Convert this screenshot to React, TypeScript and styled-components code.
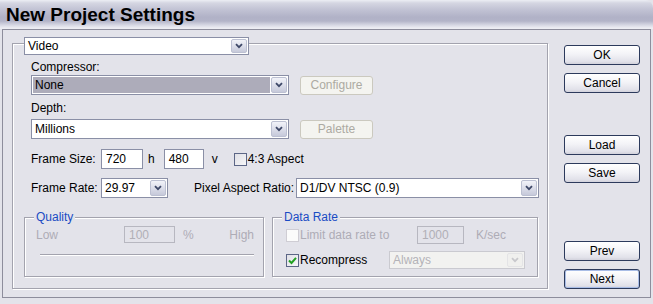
import React from "react";
import styled, { createGlobalStyle } from "styled-components";

const GlobalStyle = createGlobalStyle`
  html, body {
    margin: 0;
    padding: 0;
    background: #e3e3ea;
  }
  body {
    font-family: "Liberation Sans", Arial, sans-serif;
    font-size: 12px;
    color: #000;
  }
  * {
    box-sizing: border-box;
  }
`;

const Dialog = styled.div`
  width: 653px;
  height: 304px;
  display: flex;
  flex-direction: column;
  background: #e3e3ea;
  overflow: hidden;
`;

const TitleBar = styled.div`
  height: 29px;
  flex: none;
  display: flex;
  align-items: center;
  padding-left: 6px;
  border-top-right-radius: 8px;
  background: linear-gradient(
    to bottom,
    #eceef4 0px,
    #d5d6e2 3px,
    #c3c4d5 9px,
    #b1b2c7 17px,
    #b3b4c8 21px,
    #d6d7e3 25px,
    #ededf3 28px
  );
  font-size: 19px;
  font-weight: bold;
  color: #000;
`;

const Body = styled.div`
  height: 269px;
  margin: 0 2px;
  border: 1px solid #8d8d9c;
  display: flex;
  padding: 0 10px 0 9px;
`;

const MainGroup = styled.div`
  width: 536px;
  height: 246px;
  margin-top: 13px;
  border: 1px solid #a3a3ae;
  box-shadow: inset 1px 1px 0 #fff, 1px 1px 0 #fff;
  padding: 0 9px 0 11px;
  display: flex;
  flex-direction: column;
`;

const Upper = styled.div`
  padding-left: 7px;
  display: flex;
  flex-direction: column;
`;

const Caption = styled.div<{ $top: number }>`
  height: 14px;
  line-height: 14px;
  margin-top: ${(p) => p.$top}px;
`;

const Row = styled.div<{ $top: number; $h: number }>`
  display: flex;
  align-items: center;
  height: ${(p) => p.$h}px;
  margin-top: ${(p) => p.$top}px;
`;

const Label = styled.span<{ $w: number; $muted?: boolean }>`
  width: ${(p) => p.$w}px;
  flex: none;
  white-space: nowrap;
  color: ${(p) => (p.$muted ? "#aeacb6" : "#000")};
`;

const Unit = styled.span<{ $l: number; $r?: number; $muted?: boolean; $push?: boolean }>`
  margin: 0 ${(p) => p.$r ?? 0}px 0 ${(p) => (p.$push ? "auto" : `${p.$l}px`)};
  white-space: nowrap;
  color: ${(p) => (p.$muted ? "#aeacb6" : "#000")};
`;

const SelectShell = styled.div<{ $w: number; $h: number; $disabled?: boolean }>`
  width: ${(p) => p.$w}px;
  height: ${(p) => p.$h}px;
  flex: none;
  border: 1px solid ${(p) => (p.$disabled ? "#cacad0" : "#8a8fa6")};
  background: ${(p) => (p.$disabled ? "#f2f2f0" : "#fff")};
  display: flex;
  align-items: stretch;
`;

const SelectValue = styled.span<{ $hl?: boolean; $disabled?: boolean }>`
  flex: 1;
  display: flex;
  align-items: center;
  padding-left: 2px;
  margin: 1px 0 1px 1px;
  background: ${(p) => (p.$hl ? "#adacba" : "transparent")};
  color: ${(p) => (p.$disabled ? "#b4b3b8" : "#000")};
  white-space: nowrap;
  overflow: hidden;
`;

const ArrowButton = styled.span<{ $disabled?: boolean }>`
  width: 16px;
  flex: none;
  margin: 1px;
  display: flex;
  align-items: center;
  justify-content: center;
  border: 1px solid ${(p) => (p.$disabled ? "#e4e4e6" : "#bcc0d2")};
  border-radius: 2px;
  background: ${(p) =>
    p.$disabled
      ? "#f0f0ee"
      : "linear-gradient(to bottom, #f2f3f9 0%, #dcdeea 50%, #c6c9da 100%)"};
`;

const Legend = styled.div`
  margin: -7px 0 0 0;
  align-self: flex-start;
`;

const GhostButton = styled.div<{ $left: number }>`
  width: 73px;
  height: 19px;
  margin-left: ${(p) => p.$left}px;
  border: 1px solid #cbc9bf;
  border-radius: 3px;
  background: #f4f4f0;
  color: #acaaa2;
  display: flex;
  align-items: center;
  justify-content: center;
`;

const TextField = styled.div<{ $w: number; $h: number; $disabled?: boolean }>`
  width: ${(p) => p.$w}px;
  height: ${(p) => p.$h}px;
  flex: none;
  border: 1px solid ${(p) => (p.$disabled ? "#b7b7c0" : "#8a8fa6")};
  background: ${(p) => (p.$disabled ? "transparent" : "#fff")};
  color: ${(p) => (p.$disabled ? "#b0afb6" : "#000")};
  padding-left: 4px;
  display: flex;
  align-items: center;
`;

const Box = styled.span<{ $disabled?: boolean }>`
  width: 13px;
  height: 13px;
  flex: none;
  border: 1px solid ${(p) => (p.$disabled ? "#cfcdd4" : "#5c6686")};
  background: ${(p) =>
    p.$disabled ? "#fbfbfb" : "linear-gradient(135deg, #e0e0e6 0%, #f6f6f8 100%)"};
  display: flex;
  align-items: center;
  justify-content: center;
`;

const CheckRow = styled.span<{ $w: number; $muted?: boolean; $indent?: number }>`
  width: ${(p) => p.$w}px;
  flex: none;
  margin-left: ${(p) => p.$indent ?? 0}px;
  display: flex;
  align-items: center;
  gap: 1px;
  white-space: nowrap;
  color: ${(p) => (p.$muted ? "#aeacb6" : "#000")};
`;

const SubGroups = styled.div`
  display: flex;
  gap: 8px;
  margin-top: 19px;
`;

const SubGroup = styled.div<{ $w: number; $padR: number }>`
  width: ${(p) => p.$w}px;
  height: 60px;
  border: 1px solid #a3a3ae;
  box-shadow: inset 1px 1px 0 #fff, 1px 1px 0 #fff;
  padding: 0 ${(p) => p.$padR}px 0 11px;
  display: flex;
  flex-direction: column;
`;

const GroupTitle = styled.span`
  align-self: flex-start;
  margin: -8px 0 0 -2px;
  padding: 0 2px;
  height: 14px;
  line-height: 14px;
  background: #e3e3ea;
  color: #1a4bc4;
`;

const Groove = styled.div`
  margin: 11px 0 0 4px;
  border-top: 1px solid #a3a3ae;
  border-bottom: 1px solid #fff;
`;

const Side = styled.div`
  margin-left: 16px;
  padding-top: 15px;
  display: flex;
  flex-direction: column;
`;

const ButtonGroup = styled.div<{ $top: number }>`
  display: flex;
  flex-direction: column;
  gap: 8px;
  margin-top: ${(p) => p.$top}px;
`;

const PushButton = styled.div<{ $default?: boolean }>`
  width: 76px;
  height: 20px;
  border: 1px solid #2c3a5c;
  border-radius: 3px;
  background: linear-gradient(to bottom, #ffffff 0%, #f3f3f7 45%, #e2e2ea 85%, #d2d2dc 100%);
  box-shadow: ${(p) => (p.$default ? "inset 0 0 0 1px #a9bde6" : "none")};
  display: flex;
  align-items: center;
  justify-content: center;
  color: #000;
`;

const Chevron = ({ muted }: { muted?: boolean }) => (
  <svg width="8" height="6" viewBox="0 0 8 6">
    <path
      d="M1 1.2 L4 4.2 L7 1.2"
      fill="none"
      stroke={muted ? "#c8c8cc" : "#3e4868"}
      strokeWidth="1.8"
    />
  </svg>
);

const Tick = () => (
  <svg width="9" height="9" viewBox="0 0 9 9">
    <path d="M1 4.5 L3.5 7 L8 1.8" fill="none" stroke="#21a121" strokeWidth="2" />
  </svg>
);

type SelectProps = {
  w: number;
  h: number;
  value: string;
  hl?: boolean;
  disabled?: boolean;
};

const Select = ({ w, h, value, hl, disabled }: SelectProps) => (
  <SelectShell $w={w} $h={h} $disabled={disabled}>
    <SelectValue $hl={hl} $disabled={disabled}>
      {value}
    </SelectValue>
    <ArrowButton $disabled={disabled}>
      <Chevron muted={disabled} />
    </ArrowButton>
  </SelectShell>
);

const App: React.FC = () => {
  return (
    <>
      <GlobalStyle />
      <Dialog>
        <TitleBar>New Project Settings</TitleBar>
        <Body>
          <MainGroup>
            <Legend>
              <Select w={225} h={18} value="Video" />
            </Legend>
            <Upper>
              <Caption $top={5}>Compressor:</Caption>
              <Row $top={1} $h={20}>
                <Select w={258} h={20} value="None" hl />
                <GhostButton $left={11}>Configure</GhostButton>
              </Row>
              <Caption $top={6}>Depth:</Caption>
              <Row $top={4} $h={20}>
                <Select w={258} h={20} value="Millions" />
                <GhostButton $left={11}>Palette</GhostButton>
              </Row>
              <Row $top={10} $h={20}>
                <Label $w={70}>Frame Size:</Label>
                <TextField $w={42} $h={20}>720</TextField>
                <Unit $l={5} $r={9}>h</Unit>
                <TextField $w={40} $h={20}>480</TextField>
                <Unit $l={8} $r={16}>v</Unit>
                <CheckRow $w={80}>
                  <Box />
                  4:3 Aspect
                </CheckRow>
              </Row>
              <Row $top={9} $h={20}>
                <Label $w={70}>Frame Rate:</Label>
                <Select w={67} h={20} value="29.97" />
                <Unit $l={26} $r={2}>Pixel Aspect Ratio:</Unit>
                <Select w={243} h={20} value="D1/DV NTSC (0.9)" />
              </Row>
            </Upper>
            <SubGroups>
              <SubGroup $w={240} $padR={9}>
                <GroupTitle>Quality</GroupTitle>
                <Row $top={2} $h={17}>
                  <Label $w={88} $muted>
                    Low
                  </Label>
                  <TextField $w={51} $h={17} $disabled>
                    100
                  </TextField>
                  <Unit $l={8} $muted>
                    %
                  </Unit>
                  <Unit $l={0} $push $muted>
                    High
                  </Unit>
                </Row>
                <Groove />
              </SubGroup>
              <SubGroup $w={266} $padR={0}>
                <GroupTitle>Data Rate</GroupTitle>
                <Row $top={2} $h={18}>
                  <CheckRow $w={131} $indent={2} $muted>
                    <Box $disabled />
                    Limit data rate to
                  </CheckRow>
                  <TextField $w={47} $h={18} $disabled>
                    1000
                  </TextField>
                  <Unit $l={12} $muted>
                    K/sec
                  </Unit>
                </Row>
                <Row $top={7} $h={18}>
                  <CheckRow $w={103} $indent={2}>
                    <Box>
                      <Tick />
                    </Box>
                    Recompress
                  </CheckRow>
                  <Select w={136} h={18} value="Always" disabled />
                </Row>
              </SubGroup>
            </SubGroups>
          </MainGroup>
          <Side>
            <ButtonGroup $top={0}>
              <PushButton>OK</PushButton>
              <PushButton>Cancel</PushButton>
            </ButtonGroup>
            <ButtonGroup $top={42}>
              <PushButton>Load</PushButton>
              <PushButton>Save</PushButton>
            </ButtonGroup>
            <ButtonGroup $top={58}>
              <PushButton>Prev</PushButton>
              <PushButton $default>Next</PushButton>
            </ButtonGroup>
          </Side>
        </Body>
      </Dialog>
    </>
  );
};

export default App;
